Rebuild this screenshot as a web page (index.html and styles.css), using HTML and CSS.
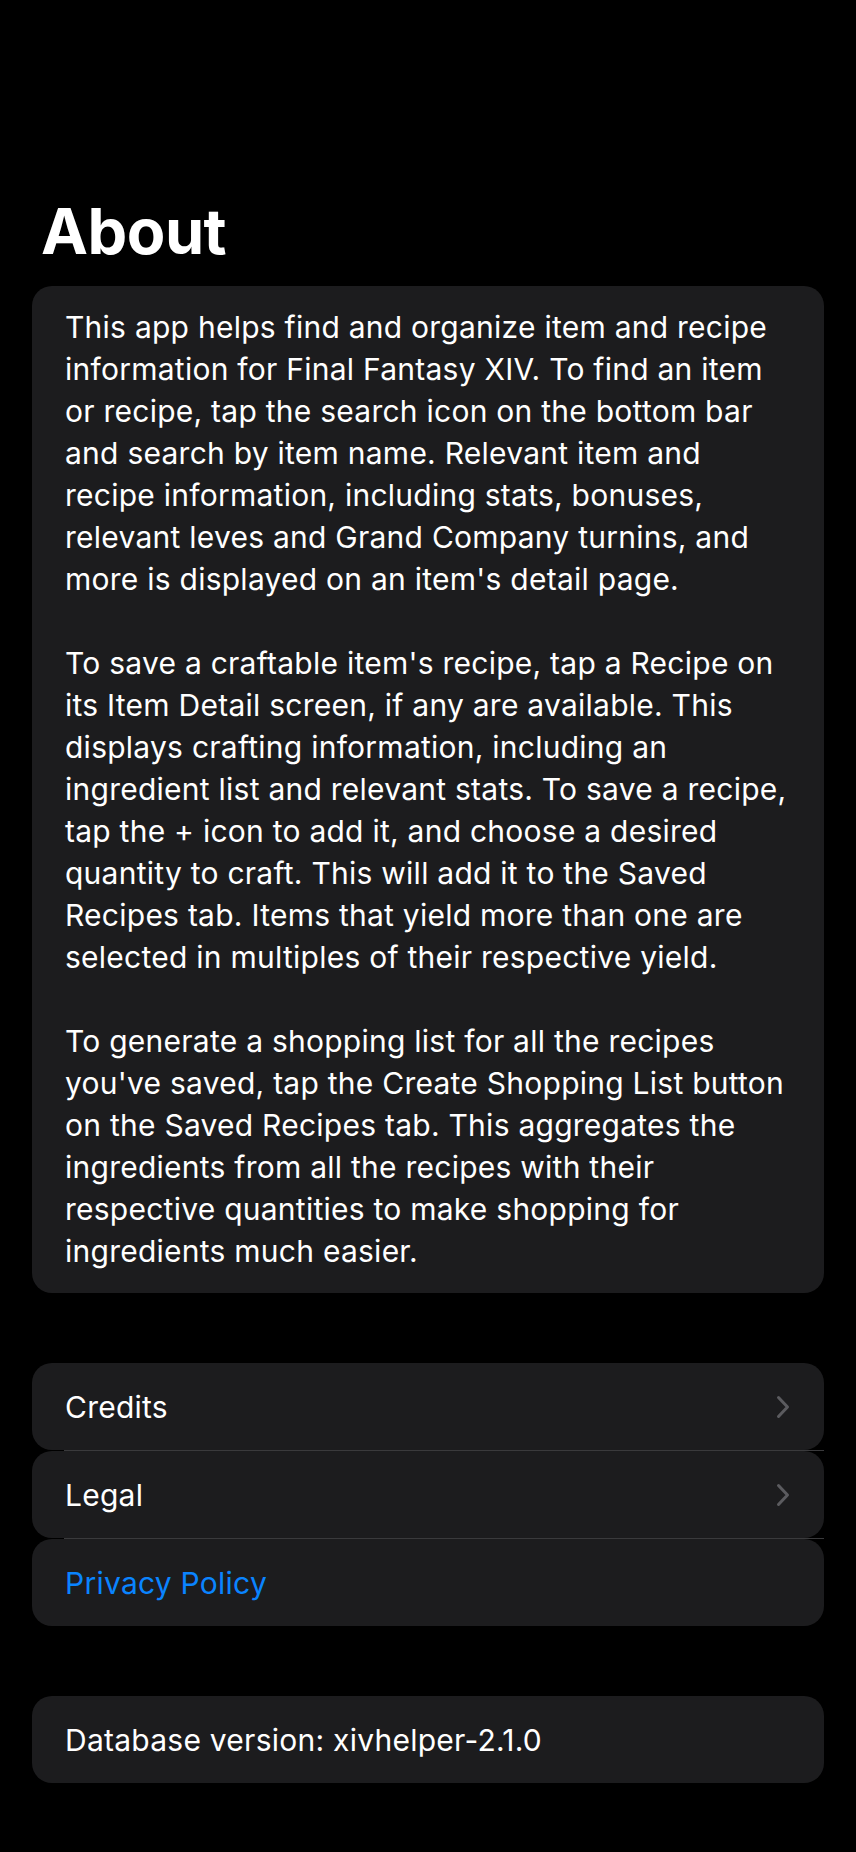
FILE: index.html
```html
<!DOCTYPE html>
<html lang="en">
<head>
<meta charset="utf-8">
<title>About</title>
<link rel="stylesheet" href="styles.css">
</head>
<body>
<main class="page">
  <h1 class="title">About</h1>

  <section class="card about">
    <p>This app helps find and organize item and recipe<br>information for Final Fantasy XIV. To find an item<br>or recipe, tap the search icon on the bottom bar<br>and search by item name. Relevant item and<br>recipe information, including stats, bonuses,<br>relevant leves and Grand Company turnins, and<br>more is displayed on an item's detail page.</p>
    <p>To save a craftable item's recipe, tap a Recipe on<br>its Item Detail screen, if any are available. This<br>displays crafting information, including an<br>ingredient list and relevant stats. To save a recipe,<br>tap the + icon to add it, and choose a desired<br>quantity to craft. This will add it to the Saved<br>Recipes tab. Items that yield more than one are<br>selected in multiples of their respective yield.</p>
    <p>To generate a shopping list for all the recipes<br>you've saved, tap the Create Shopping List button<br>on the Saved Recipes tab. This aggregates the<br>ingredients from all the recipes with their<br>respective quantities to make shopping for<br>ingredients much easier.</p>
  </section>

  <nav class="list">
    <a class="row" href="#">
      <span class="label">Credits</span>
      <svg class="chev" width="14" height="24" viewBox="0 0 14 24"><path d="M2.5 2.5 L11.5 12 L2.5 21.5" fill="none" stroke="currentColor" stroke-width="3" stroke-linecap="round" stroke-linejoin="round"/></svg>
    </a>
    <div class="sep"></div>
    <a class="row" href="#">
      <span class="label">Legal</span>
      <svg class="chev" width="14" height="24" viewBox="0 0 14 24"><path d="M2.5 2.5 L11.5 12 L2.5 21.5" fill="none" stroke="currentColor" stroke-width="3" stroke-linecap="round" stroke-linejoin="round"/></svg>
    </a>
    <div class="sep"></div>
    <a class="row" href="#">
      <span class="label link">Privacy Policy</span>
    </a>
  </nav>

  <section class="card row version">
    <span class="label">Database version: xivhelper-2.1.0</span>
  </section>
</main>
</body>
</html>
```

FILE: styles.css
```css
* { box-sizing: border-box; }

html, body {
  margin: 0;
  padding: 0;
  background: #000;
}

body {
  font-family: Inter, "Noto Sans", "Liberation Sans", sans-serif;
  color: #fff;
  -webkit-font-smoothing: antialiased;
}

.page {
  display: flex;
  flex-direction: column;
  padding: 193px 32px 60px;
  min-height: 1852px;
}

.title {
  margin: 0 0 17px 9px;
  font-size: 63px;
  line-height: 76px;
  font-weight: 700;
  letter-spacing: -0.5px;
}

.card {
  background: #1c1c1e;
  border-radius: 20px;
}

.about {
  padding: 20px 20px 21px 33px;
}

.about p {
  margin: 0;
  font-size: 30px;
  line-height: 42px;
  white-space: nowrap;
  letter-spacing: 0.25px;
}

.about p + p {
  margin-top: 42px;
}

.list {
  margin-top: 70px;
  display: flex;
  flex-direction: column;
}

.row {
  display: flex;
  align-items: center;
  justify-content: space-between;
  height: 87px;
  padding: 0 34px 0 33px;
  background: #1c1c1e;
  border-radius: 20px;
  text-decoration: none;
  color: #fff;
}

.label {
  font-size: 30px;
  letter-spacing: 0.25px;
}

.link {
  color: #0a84ff;
}

.chev {
  color: #5b5b5f;
}

.sep {
  height: 1px;
  margin-left: 32px;
  background: #3a3a3c;
}

.version {
  margin-top: 70px;
}
```
